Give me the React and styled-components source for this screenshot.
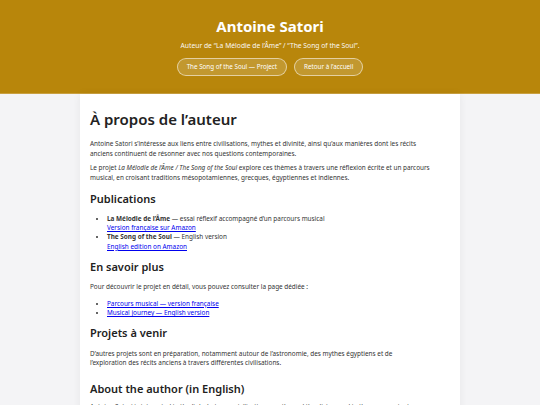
import React from 'react'
import styled, { createGlobalStyle } from 'styled-components'

const GlobalStyle = createGlobalStyle`
  html, body {
    margin: 0;
    padding: 0;
    background: #f4f4f6;
    font-family: "Noto Sans", "Open Sans", sans-serif;
    color: #333;
  }
  * { box-sizing: border-box; }
`;

const Header = styled.header`
  background: #b8860b;
  border-bottom: 1px solid #c9a040;
  color: #fff;
  text-align: center;
  padding: 17px 10px 17px;
`;

const SiteTitle = styled.h1`
  margin: 0;
  font-size: 15px;
  font-weight: 700;
  line-height: 1.3;
`;

const Tagline = styled.p`
  margin: 4px 0 0;
  font-size: 6.75px;
  opacity: 0.95;
`;

const Nav = styled.nav`
  display: flex;
  justify-content: center;
  gap: 7px;
  margin-top: 8px;
`;

const NavButton = styled.a`
  display: inline-block;
  padding: 4px 9px;
  border: 1px solid rgba(255, 255, 255, 0.55);
  border-radius: 999px;
  background: rgba(255, 255, 255, 0.15);
  color: #fff;
  font-size: 6.25px;
  text-decoration: none;
  line-height: 1.3;
`;

const Main = styled.main`
  width: 380px;
  margin: 0 auto;
  background: #fff;
  padding: 12px 10px 20px;
  box-shadow: 0 0 8px rgba(0, 0, 0, 0.06);
  min-height: 320px;
`;

const Title = styled.h1`
  margin: 4px 0 10px;
  font-size: 15px;
  font-weight: 600;
  color: #222;
  line-height: 1.3;
`;

const Heading = styled.h2`
  margin: ${p => (p.$spaced ? '14px' : '9px')} 0 ${p => (p.$spaced ? '6px' : '8px')};
  font-size: 11px;
  font-weight: 600;
  color: #222;
  line-height: 1.3;
`;

const Para = styled.p`
  margin: 0 0 5px;
  font-size: 6.4px;
  line-height: 1.5;
`;

const List = styled.ul`
  margin: 7px 0 2px;
  padding-left: 17px;
  font-size: 6.4px;
  line-height: 1.45;
`;

const Link = styled.a`
  color: #0000ee;
  text-decoration: underline;
`;

export default function App() {
  return (
    <>
      <GlobalStyle />
      <Header>
        <SiteTitle>Antoine Satori</SiteTitle>
        <Tagline>Auteur de “La Mélodie de l’Âme” / “The Song of the Soul”.</Tagline>
        <Nav>
          <NavButton href="#">The Song of the Soul — Project</NavButton>
          <NavButton href="#">Retour à l’accueil</NavButton>
        </Nav>
      </Header>
      <Main>
        <Title>À propos de l’auteur</Title>
        <Para>
          Antoine Satori s’intéresse aux liens entre civilisations, mythes et divinité, ainsi qu’aux manières dont les récits<br />
          anciens continuent de résonner avec nos questions contemporaines.
        </Para>
        <Para>
          Le projet <em>La Mélodie de l’Âme / The Song of the Soul</em> explore ces thèmes à travers une réflexion écrite et un parcours<br />
          musical, en croisant traditions mésopotamiennes, grecques, égyptiennes et indiennes.
        </Para>

        <Heading>Publications</Heading>
        <List>
          <li>
            <strong>La Mélodie de l’Âme</strong> — essai réflexif accompagné d’un parcours musical<br />
            <Link href="#">Version française sur Amazon</Link>
          </li>
          <li>
            <strong>The Song of the Soul</strong> — English version<br />
            <Link href="#">English edition on Amazon</Link>
          </li>
        </List>

        <Heading>En savoir plus</Heading>
        <Para>Pour découvrir le projet en détail, vous pouvez consulter la page dédiée :</Para>
        <List>
          <li><Link href="#">Parcours musical — version française</Link></li>
          <li><Link href="#">Musical journey — English version</Link></li>
        </List>

        <Heading>Projets à venir</Heading>
        <Para>
          D’autres projets sont en préparation, notamment autour de l’astronomie, des mythes égyptiens et de<br />
          l’exploration des récits anciens à travers différentes civilisations.
        </Para>

        <Heading $spaced>About the author (in English)</Heading>
        <Para>
          Antoine Satori is interested in the links between civilizations, myths and the divine, and in the ways ancient<br />
          narratives continue to resonate with our contemporary questions.
        </Para>
      </Main>
    </>
  )
}
